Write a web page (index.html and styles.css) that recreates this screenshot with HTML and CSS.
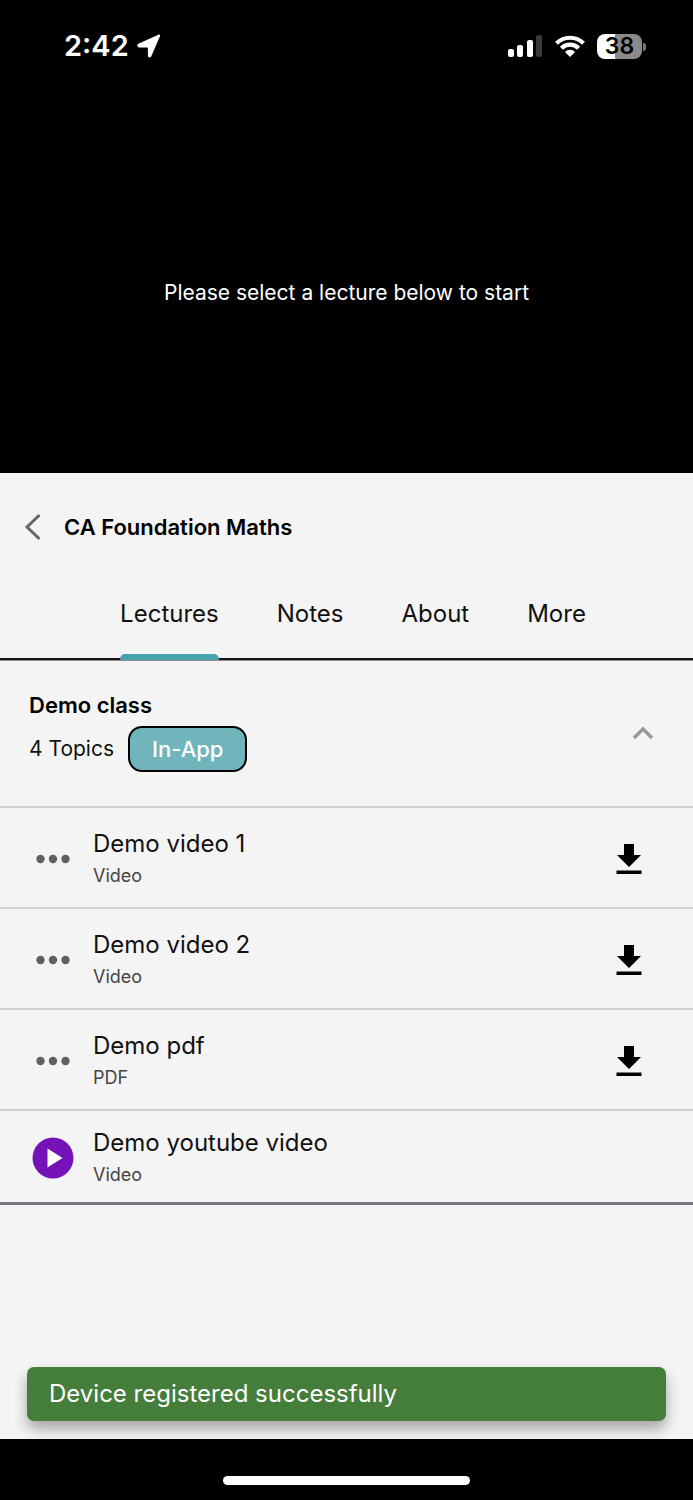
FILE: index.html
```html
<!DOCTYPE html>
<html lang="en">
<head>
<meta charset="utf-8">
<meta name="viewport" content="width=device-width, initial-scale=1">
<title>CA Foundation Maths</title>
<link rel="stylesheet" href="styles.css">
</head>
<body>
<div class="screen">
  <section class="player">
    <div class="status">
      <div class="status-time">
        <span>2:42</span>
        <svg width="24" height="24" viewBox="0 0 24 24" aria-hidden="true"><path d="M1.300 9.700 21.300.700c1.300-.5 2.200.4 1.600 1.700L14.300 22.200c-.8 1.800-3.400 1.500-3.400-.5V14c0-.4-.2-.6-.6-.6H2.400C.2 13.400-.4 10.500 1.300 9.700z" fill="#fff"/></svg>
      </div>
      <div class="status-icons">
        <svg width="36" height="24" viewBox="0 0 36 24" aria-hidden="true"><rect x="1" y="15" width="6" height="8" rx="2" fill="#fff"/><rect x="10" y="11" width="6" height="12" rx="2" fill="#fff"/><rect x="20" y="6" width="6" height="17" rx="2" fill="#fff"/><rect x="29" y="1" width="6" height="22" rx="2" fill="#3a3a3a"/></svg>
        <svg width="30" height="24" viewBox="0 0 30 24" aria-hidden="true"><path d="M1.500 9.200a19.500 19.500 0 0 1 27 0M6.400 14.200a12.300 12.300 0 0 1 17.200 0" fill="none" stroke="#fff" stroke-width="4.200"/><path d="M15 23 9.900 17.900a7.300 7.300 0 0 1 10.200 0z" fill="#fff"/></svg>
        <div class="battery"><span class="battery-level">38</span><i class="battery-tip"></i></div>
      </div>
    </div>
    <p class="player-message">Please select a lecture below to start</p>
  </section>

  <main class="course">
    <header class="course-head">
      <button class="icon-button" type="button" aria-label="Back"><svg width="18" height="28" viewBox="0 0 18 28" aria-hidden="true"><path d="M15.500 2 3 14l12.500 12" fill="none" stroke="#666" stroke-width="3"/></svg></button>
      <h1 class="heading">CA Foundation Maths</h1>
    </header>
    <nav class="tabs" aria-label="Course sections">
      <a class="tab tab-active" href="#lectures" aria-current="page">Lectures</a>
      <a class="tab" href="#notes">Notes</a>
      <a class="tab" href="#about">About</a>
      <a class="tab" href="#more">More</a>
    </nav>

    <section class="group" id="lectures">
      <div class="group-head">
        <div class="group-info">
          <h2 class="heading">Demo class</h2>
          <div class="group-meta"><span>4 Topics</span><span class="badge">In-App</span></div>
        </div>
        <button class="icon-button" type="button" aria-label="Collapse Demo class"><svg width="22" height="16" viewBox="0 0 22 16" aria-hidden="true"><path d="M2 13 11 4l9 9" fill="none" stroke="#999" stroke-width="3.500"/></svg></button>
      </div>
      <ul class="lessons">
        <li class="lesson">
          <button class="icon-button lesson-icon" type="button" aria-label="Options for Demo video 1"><svg width="34" height="10" viewBox="0 0 34 10" aria-hidden="true"><g fill="#606060"><circle cx="4.500" cy="5" r="4.200"/><circle cx="17" cy="5" r="4.200"/><circle cx="29.500" cy="5" r="4.200"/></g></svg></button>
          <div class="lesson-text"><span class="lesson-title">Demo video 1</span><span class="lesson-type">Video</span></div>
          <button class="icon-button" type="button" aria-label="Download Demo video 1"><svg width="26" height="32" viewBox="0 0 26 32" aria-hidden="true"><path d="M8 1h10v11h7L13 24 1 12h7zM.5 27.500h25v3.500h-25z"/></svg></button>
        </li>
        <li class="lesson">
          <button class="icon-button lesson-icon" type="button" aria-label="Options for Demo video 2"><svg width="34" height="10" viewBox="0 0 34 10" aria-hidden="true"><g fill="#606060"><circle cx="4.500" cy="5" r="4.200"/><circle cx="17" cy="5" r="4.200"/><circle cx="29.500" cy="5" r="4.200"/></g></svg></button>
          <div class="lesson-text"><span class="lesson-title">Demo video 2</span><span class="lesson-type">Video</span></div>
          <button class="icon-button" type="button" aria-label="Download Demo video 2"><svg width="26" height="32" viewBox="0 0 26 32" aria-hidden="true"><path d="M8 1h10v11h7L13 24 1 12h7zM.5 27.500h25v3.500h-25z"/></svg></button>
        </li>
        <li class="lesson">
          <button class="icon-button lesson-icon" type="button" aria-label="Options for Demo pdf"><svg width="34" height="10" viewBox="0 0 34 10" aria-hidden="true"><g fill="#606060"><circle cx="4.500" cy="5" r="4.200"/><circle cx="17" cy="5" r="4.200"/><circle cx="29.500" cy="5" r="4.200"/></g></svg></button>
          <div class="lesson-text"><span class="lesson-title">Demo pdf</span><span class="lesson-type">PDF</span></div>
          <button class="icon-button" type="button" aria-label="Download Demo pdf"><svg width="26" height="32" viewBox="0 0 26 32" aria-hidden="true"><path d="M8 1h10v11h7L13 24 1 12h7zM.5 27.500h25v3.500h-25z"/></svg></button>
        </li>
        <li class="lesson lesson-compact">
          <button class="icon-button lesson-icon" type="button" aria-label="Play Demo youtube video"><svg width="42" height="42" viewBox="0 0 42 42" aria-hidden="true"><circle cx="21" cy="21" r="20.500" fill="#7512b8"/><path d="M15.500 11.500v19L30.500 21z" fill="#fff"/></svg></button>
          <div class="lesson-text"><span class="lesson-title">Demo youtube video</span><span class="lesson-type">Video</span></div>
        </li>
      </ul>
    </section>

    <div class="toast" role="status">Device registered successfully</div>
  </main>
  <footer class="home"><div class="home-bar"></div></footer>
</div>
</body>
</html>
```
FILE: styles.css
```css
* { box-sizing: border-box; }

body {
  margin: 0;
  background: #000;
  color: #111;
  font-family: Inter, "Liberation Sans", sans-serif;
  font-size: 24px;
  line-height: 32px;
}

h1, h2, p, ul { margin: 0; padding: 0; }
svg { display: block; }

.screen {
  display: flex;
  flex-direction: column;
  min-height: 100vh;
}

.player {
  display: flex;
  flex-direction: column;
  color: #fff;
}

.status {
  display: flex;
  justify-content: space-between;
  align-items: center;
  padding: 30px 51px 0 64px;
}

.status-time {
  display: flex;
  align-items: center;
  gap: 8px;
  font-size: 29px;
  font-weight: 600;
}

.status-icons {
  display: flex;
  align-items: center;
  gap: 12px;
}

.battery {
  position: relative;
  width: 45px;
  height: 25px;
  border-radius: 8px;
  background: linear-gradient(90deg, #fff 40%, #8a8a8a 40%);
  color: #000;
  font-size: 23px;
  font-weight: 600;
  line-height: 25px;
  text-align: center;
}

.battery-tip {
  position: absolute;
  left: 100%;
  top: 9px;
  width: 3px;
  height: 8px;
  margin-left: 1px;
  border-radius: 0 4px 4px 0;
  background: #777;
}

.player-message {
  padding: 215px 20px 164px;
  font-size: 21px;
  text-align: center;
}

.course {
  display: flex;
  flex: 1;
  flex-direction: column;
  background: #f4f4f4;
}

.course-head {
  display: flex;
  align-items: center;
  gap: 22px;
  padding: 38px 24px 0;
}

.heading {
  color: #000;
  font-size: 22px;
  font-weight: 600;
  line-height: 32px;
}

.icon-button {
  display: flex;
  justify-content: center;
  align-items: center;
  padding: 0;
  border: 0;
  background: none;
  cursor: pointer;
}

.tabs {
  display: flex;
  justify-content: center;
  gap: 58px;
  padding: 55px 0 0 13px;
  border-bottom: 2px solid #16131a;
  box-shadow: 0 1px #8d8792;
}

.tab {
  height: 60px;
  color: #111;
  text-decoration: none;
}

.tab-active {
  position: relative;
}

.tab-active::after {
  position: absolute;
  right: 0;
  bottom: -2px;
  left: 0;
  height: 6px;
  border-radius: 5px 5px 0 0;
  background: #48a2ab;
  content: "";
}

.group { border-bottom: 3px solid #7a747e; }

.group-head {
  display: flex;
  justify-content: space-between;
  align-items: center;
  padding: 0 39px 0 29px;
}

.group-info { padding: 29px 0 34px; }

.group-meta {
  display: flex;
  align-items: center;
  gap: 14px;
  padding-top: 5px;
  font-size: 21px;
}

.badge {
  padding: 5px 22px;
  border: 2px solid #000;
  border-radius: 14px;
  background: #6fb5bb;
  color: #fff;
  font-size: 22px;
  font-weight: 500;
}

.lessons { list-style: none; }

.lesson {
  display: flex;
  align-items: center;
  gap: 19px;
  padding: 19px 51px 17px 31px;
  border-top: 2px solid #d0d0d0;
}

.lesson-compact {
  padding-top: 15px;
  padding-bottom: 13px;
}

.lesson-icon { width: 43px; }

.lesson-text {
  display: flex;
  flex: 1;
  flex-direction: column;
}

.lesson-title { line-height: 34px; }

.lesson-type {
  color: #444;
  font-size: 18px;
  line-height: 29px;
}

.toast {
  margin: auto 27px 18px;
  padding: 11px 22px;
  border-radius: 7px;
  background: #457d3b;
  box-shadow: 0 8px 14px rgb(0 0 0 / 32%);
  color: #fff;
}

.home {
  display: flex;
  position: relative;
  justify-content: center;
  padding: 37px 0 15px;
  background: #000;
}

.home-bar {
  width: 247px;
  height: 9px;
  border-radius: 5px;
  background: #fff;
}
```
